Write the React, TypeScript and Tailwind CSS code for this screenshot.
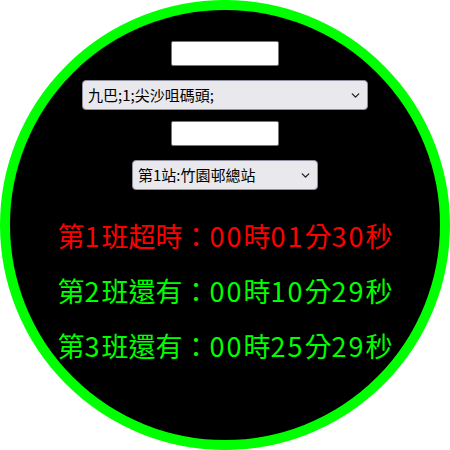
import { ChevronDown } from 'lucide-react';

const CJK = { fontFamily: '"Noto Sans CJK TC", "Noto Sans", sans-serif' };

const rows = [
  { text: '第1班超時：00時01分30秒', color: 'text-[#ff0000]' },
  { text: '第2班還有：00時10分29秒', color: 'text-[#00ff00]' },
  { text: '第3班還有：00時25分29秒', color: 'text-[#00ff00]' },
];

// digits get a little extra spacing, the original used a wide digital face
function Countdown({ text }: { text: string }) {
  const parts = text.split(/(\d+)/);
  return (
    <>
      {parts.map((p, i) =>
        /^\d+$/.test(p) ? (
          <span key={i} className="tracking-[2px]">{p}</span>
        ) : (
          <span key={i}>{p}</span>
        ),
      )}
    </>
  );
}

function Picker({ width, label }: { width: string; label: string }) {
  return (
    <div className={`relative ${width} h-[30px]`}>
      <select
        className="w-full h-full appearance-none bg-[#e9e9ed] border border-[#8f8f9d] rounded-[4px] pl-[5px] text-[15px] text-black outline-none"
        style={CJK}
        defaultValue={label}
      >
        <option>{label}</option>
      </select>
      <ChevronDown
        size={13}
        strokeWidth={2.5}
        className="absolute right-[6px] top-[9px] text-[#222] pointer-events-none"
      />
    </div>
  );
}

export default function App() {
  return (
    <div className="w-[450px] h-[450px] bg-white">
      <div
        className="w-[450px] h-[450px] rounded-full border-[10px] border-[#00ff00] bg-black flex flex-col items-center pt-[31px]"
        style={CJK}
      >
        <input className="w-[108px] h-[25px] bg-white border border-[#767676] rounded-[2px]" />
        <div className="mt-[14px]">
          <Picker width="w-[286px]" label="九巴;1;尖沙咀碼頭;" />
        </div>
        <input className="mt-[11px] w-[108px] h-[25px] bg-white border border-[#767676] rounded-[2px]" />
        <div className="mt-[14px]">
          <Picker width="w-[186px]" label="第1站:竹園邨總站" />
        </div>
        <div className="mt-[18px] flex flex-col items-center">
          {rows.map((r) => (
            <div key={r.text} className={`text-[27px] leading-[55px] whitespace-nowrap ${r.color}`}>
              <Countdown text={r.text} />
            </div>
          ))}
        </div>
      </div>
    </div>
  );
}
